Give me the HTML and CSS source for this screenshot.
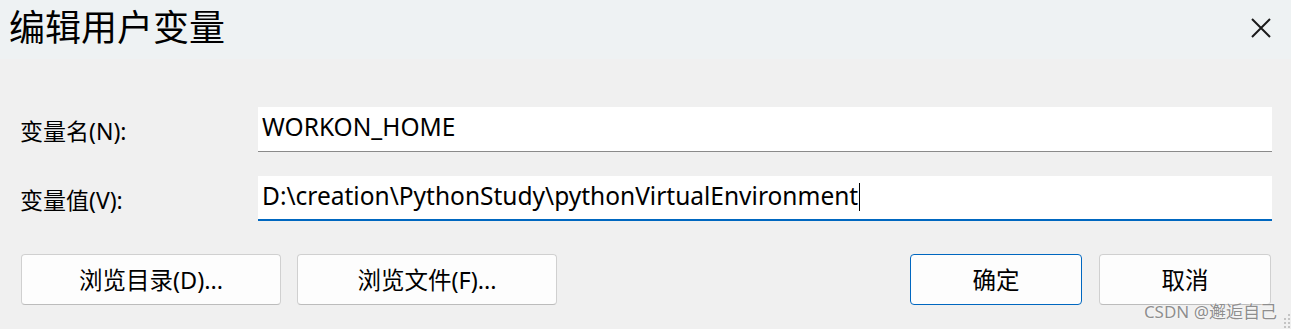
FILE: index.html
```html
<!DOCTYPE html>
<html>
  <head>
    <meta charset="UTF-8" />
    <title>编辑用户变量</title>
    <link rel="stylesheet" href="styles.css">
  </head>
  <body>
    <div class="title-bar">
      <div class="title-bar-text">编辑用户变量</div>
      <div class="title-bar-close">
        <svg viewBox="0 0 20 20" width="20" height="20">
          <path d="M1 1 L19 19 M19 1 L1 19" />
        </svg>
      </div>
    </div>

    <div class="form">
      <label class="field-label">变量名(N):</label>
      <div class="field-input">WORKON_HOME</div>
      <label class="field-label">变量值(V):</label>
      <div class="field-input focused">D:\creation\PythonStudy\pythonVirtualEnvironment<span class="caret"></span></div>
    </div>

    <div class="actions">
      <div class="actions-left">
        <button class="btn wide">浏览目录(D)...</button>
        <button class="btn wide">浏览文件(F)...</button>
      </div>
      <div class="actions-right">
        <button class="btn primary">确定</button>
        <button class="btn">取消</button>
      </div>
    </div>

    <div class="watermark">CSDN @邂逅自己</div>
    <svg class="grip" viewBox="0 0 9 17" width="9" height="17">
      <rect x="6" y="2" width="2" height="2" />
      <rect x="6" y="6" width="2" height="2" />
      <rect x="2" y="6" width="2" height="2" />
      <rect x="6" y="10" width="2" height="2" />
      <rect x="2" y="10" width="2" height="2" />
      <rect x="6" y="14" width="2" height="2" />
      <rect x="2" y="14" width="2" height="2" />
    </svg>
  </body>
</html>
```

FILE: styles.css
```css
body {
  font-family: "Noto Sans", "Noto Sans CJK SC", sans-serif;
  margin: 0;
  padding: 0;
  background-color: #f0f0f0;
  color: #000;
  width: 1291px;
  height: 329px;
  overflow: hidden;
  position: relative;
}
.title-bar {
  background-color: #eef2f3;
  height: 59px;
  display: flex;
  justify-content: space-between;
  align-items: center;
}
.title-bar-text {
  margin-left: 9px;
  font-size: 36px;
  line-height: 40px;
  margin-top: -3px;
}
.title-bar-close {
  width: 20px;
  height: 20px;
  margin-right: 20px;
  margin-top: -4px;
}
.title-bar-close path {
  stroke: #1a1a1a;
  stroke-width: 2;
  fill: none;
}
.form {
  display: grid;
  grid-template-columns: 238px 1fr;
  row-gap: 24px;
  padding: 48px 19px 0 20px;
  align-items: center;
}
.field-label {
  font-size: 23px;
  padding-top: 1px;
}
.field-input {
  background-color: #fff;
  height: 44px;
  border-bottom: 1px solid #8a8a8a;
  font-size: 24.5px;
  padding: 0 0 5px 4px;
  box-sizing: border-box;
  height: 45px;
  white-space: nowrap;
  display: flex;
  align-items: center;
}
.field-input.focused {
  border-bottom: 2px solid #0067c0;
}
.caret {
  display: inline-block;
  width: 1px;
  height: 28px;
  background-color: #000;
  margin-left: 1px;
  margin-top: 3px;
}
.actions {
  display: flex;
  justify-content: space-between;
  padding: 33px 20px 0 21px;
}
.actions-left,
.actions-right {
  display: flex;
  gap: 16px;
}
.actions-right {
  gap: 17px;
}
.btn {
  font-family: "Noto Sans", "Noto Sans CJK SC", sans-serif;
  font-size: 23.5px;
  height: 51px;
  width: 172px;
  background-color: #fdfdfd;
  border: 1px solid #d0d0d0;
  border-bottom-color: #bcbcbc;
  border-radius: 4px;
  color: #000;
  padding: 0 0 2px;
}
.btn.wide {
  width: 260px;
}
.btn.primary {
  border: 1px solid #0067c0;
}
.watermark {
  position: absolute;
  right: 14px;
  bottom: 6px;
  font-size: 17px;
  color: #8e8e8e;
  text-shadow: 0 0 2px #fff, 0 0 1px #fff;
}
.grip {
  position: absolute;
  right: 0;
  bottom: 0;
  fill: #c4c4c4;
}
```
